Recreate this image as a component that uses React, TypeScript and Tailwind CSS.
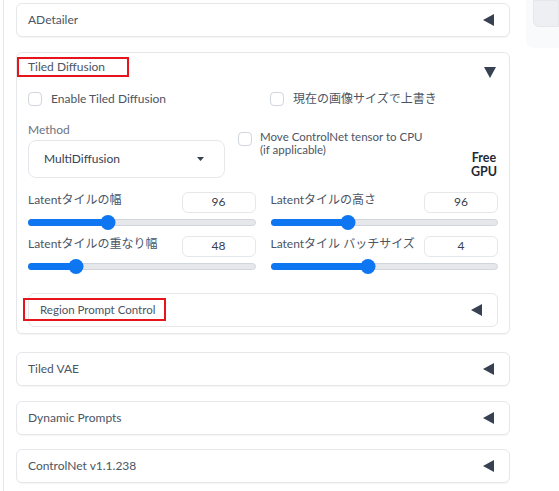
import React from 'react';

const font = { fontFamily: '"Lato", "Noto Sans CJK JP", sans-serif' };

function LeftTri() {
  return (
    <svg width="11" height="12" viewBox="0 0 11 12" className="shrink-0">
      <polygon points="11,0 11,12 0,6" fill="#374151" />
    </svg>
  );
}

function DownTri() {
  return (
    <svg width="12" height="11" viewBox="0 0 12 11" className="shrink-0">
      <polygon points="0,0 12,0 6,11" fill="#374151" />
    </svg>
  );
}

function Checkbox({ label }: { label: string }) {
  return (
    <label className="flex items-center gap-[9px] text-[12px] text-[#4b5563]">
      <span className="h-[14px] w-[14px] shrink-0 rounded-[4px] border border-gray-300 bg-white" />
      {label}
    </label>
  );
}

function Collapsed({ title }: { title: string }) {
  return (
    <div className="flex h-[34px] items-center justify-between rounded-md border border-gray-200 bg-white pl-[11px] pr-[15px] shadow-[0_1px_1px_rgba(0,0,0,0.04)]">
      <span className="text-[12px] text-[#4b5563]">{title}</span>
      <LeftTri />
    </div>
  );
}

function SliderField({ label, value, pct }: { label: string; value: string; pct: number }) {
  return (
    <div className="flex flex-col">
      <div className="flex h-[22px] items-center justify-between">
        <span className="-mt-[5px] text-[12px] text-[#4b5563]">{label}</span>
        <span className="flex h-[21px] w-[74px] items-center justify-center rounded-md border border-gray-200 bg-white text-[12px] text-[#374151]">
          {value}
        </span>
      </div>
      <div className="relative mt-[2px] h-[15px]">
        <div className="absolute left-0 right-0 top-[4px] h-[7px] rounded-full border border-gray-300 bg-gray-200" />
        <div
          className="absolute left-0 top-[4px] h-[7px] rounded-full bg-[#0f76f2]"
          style={{ width: `${pct}%` }}
        />
        <div
          className="absolute top-0 h-[15px] w-[15px] -translate-x-1/2 rounded-full bg-[#0f76f2]"
          style={{ left: `${pct}%` }}
        />
      </div>
    </div>
  );
}

export default function App() {
  return (
    <div className="flex h-[491px] w-[559px] overflow-hidden bg-white" style={font}>
      <div className="ml-[3px] flex w-[507px] border-l border-gray-200 pl-[12px]">
        <div className="flex w-[494px] flex-col pt-[3px]">
          <Collapsed title="ADetailer" />

          <div className="mt-[15px] rounded-md border border-gray-200 bg-white pb-[6px] shadow-[0_1px_1px_rgba(0,0,0,0.04)]">
            <div className="relative flex h-[34px] items-center justify-between pl-[11px] pr-[13px] pt-[5px]">
              <span className="relative -mt-[12px] text-[12px] text-[#4b5563]">
                Tiled Diffusion
                <span className="absolute -left-[11px] -top-[1px] h-[20px] w-[112px] border-2 border-[#e8141c]" />
              </span>
              <DownTri />
            </div>

            <div className="px-[11px]">
              <div className="mt-[3px] grid grid-cols-2 gap-[14px]">
                <Checkbox label="Enable Tiled Diffusion" />
                <Checkbox label="現在の画像サイズで上書き" />
              </div>

              <div className="mt-[15px] flex">
                <div className="flex w-[197px] flex-col">
                  <span className="text-[12px] leading-[14px] text-[#6b7280]">Method</span>
                  <div className="mt-[3px] flex h-[38px] items-center justify-between rounded-lg border border-gray-200 bg-white pl-[15px] pr-[20px]">
                    <span className="text-[12px] text-[#374151]">MultiDiffusion</span>
                    <svg width="7" height="4" viewBox="0 0 7 4">
                      <polygon points="0,0 7,0 3.5,4" fill="#374151" />
                    </svg>
                  </div>
                </div>
                <div className="ml-[13px] mt-[8px] flex items-start gap-[8px]">
                  <span className="mt-[1px] h-[14px] w-[14px] shrink-0 rounded-[4px] border border-gray-300 bg-white" />
                  <span className="text-[11.5px] leading-[12.5px] text-[#4b5563]">
                    Move ControlNet tensor to CPU
                    <br />
                    (if applicable)
                  </span>
                </div>
                <div className="ml-auto mr-px mt-[28px] flex flex-col items-center text-[12.5px] font-bold leading-[14px] text-[#1f2937]">
                  <span>Free</span>
                  <span>GPU</span>
                </div>
              </div>

              <div className="mt-[12px] grid grid-cols-2 gap-x-[15px] gap-y-[5px]">
                <SliderField label="Latentタイルの幅" value="96" pct={35} />
                <SliderField label="Latentタイルの高さ" value="96" pct={34} />
                <SliderField label="Latentタイルの重なり幅" value="48" pct={21} />
                <SliderField label="Latentタイル バッチサイズ" value="4" pct={43} />
              </div>

              <div className="mt-[19px] flex h-[34px] items-center justify-between rounded-md border border-gray-200 bg-white pl-[11px] pr-[15px]">
                <span className="relative text-[11.5px] text-[#4b5563]">
                  Region Prompt Control
                  <span className="absolute -left-[17px] -top-[3px] h-[23px] w-[143px] border-2 border-[#e8141c]" />
                </span>
                <LeftTri />
              </div>
            </div>
          </div>

          <div className="mt-[18px]">
            <Collapsed title="Tiled VAE" />
          </div>
          <div className="mt-[15px]">
            <Collapsed title="Dynamic Prompts" />
          </div>
          <div className="mt-[14px]">
            <Collapsed title="ControlNet v1.1.238" />
          </div>
        </div>
      </div>

      <div className="ml-[16px] h-[48px] flex-1 rounded-bl-lg bg-[#f9fafb] pl-[7px]">
        <div className="h-[27px] rounded-bl-md border border-gray-200 bg-[#eeeff2]" />
      </div>
    </div>
  );
}
